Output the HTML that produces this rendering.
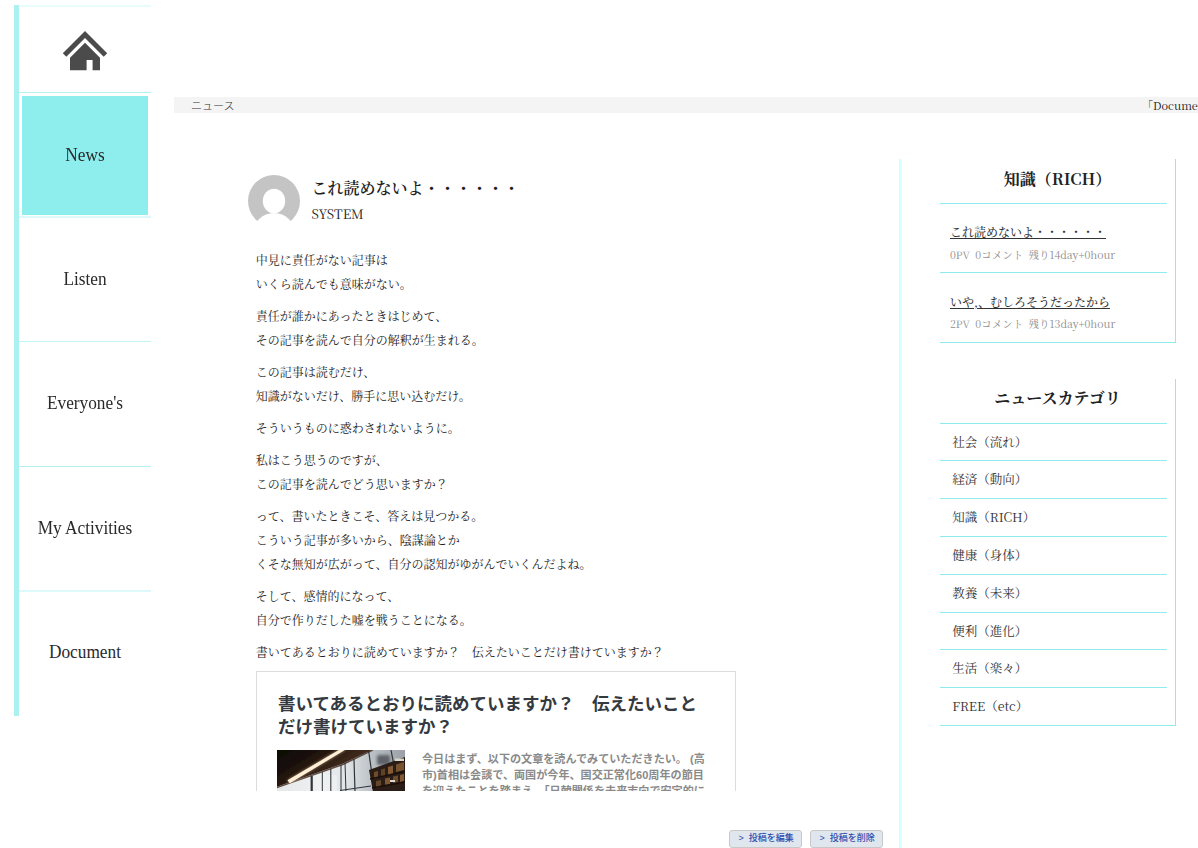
<!DOCTYPE html>
<html lang="ja">
<head>
<meta charset="utf-8">
<style>
html,body{margin:0;padding:0;background:#fff;}
body{width:1198px;height:848px;overflow:hidden;position:relative;font-family:"Liberation Serif","Noto Serif CJK JP",serif;color:#222;}
.abs{position:absolute;}
/* nav */
#bar{left:14px;top:5px;width:5px;height:711px;background:#adf0f0;}
#topline{left:19px;top:5px;width:132px;height:2px;background:#e9fcfc;}
.nl{position:absolute;left:19px;width:132px;height:1px;background:#b4f1f1;}
.nl2{position:absolute;left:19px;width:132px;height:2px;background:#dcfafa;}
.nav{position:absolute;left:19px;width:132px;display:flex;align-items:center;justify-content:center;font-family:"Liberation Serif",serif;font-size:17.3px;color:#2a2a2a;white-space:nowrap;}
#news{left:22px;top:96px;width:126px;height:119px;background:#8eeded;}
/* breadcrumb */
#crumb{left:174px;top:97px;width:1024px;height:16px;background:#f4f4f4;}
#crumb .t{position:absolute;left:17px;top:1px;font-family:"Liberation Sans","Noto Sans CJK JP",sans-serif;font-size:11px;line-height:17px;color:#333;font-weight:300;}
#crumb .r{position:absolute;left:968px;top:0px;font-family:"Noto Serif CJK JP","Liberation Serif",serif;font-size:11px;line-height:17px;color:#222;white-space:nowrap;}
/* main */
#vline{left:899px;top:159px;width:3px;height:689px;background:#d8fefe;}
.body p{margin:0;font-size:12px;line-height:24px;}

#avatar{left:248px;top:175px;}
#ttl{left:311.5px;top:176px;font-family:"Noto Serif CJK JP",serif;font-size:16px;font-weight:600;line-height:24px;color:#222;white-space:nowrap;}
#sys{left:311.5px;top:204px;font-family:"Noto Serif CJK JP",serif;font-size:13px;line-height:20px;color:#222;}
#body{left:255.7px;top:248px;width:640px;font-family:"Noto Serif CJK JP",serif;color:#222;}
#body p{margin:0 0 8px 0;font-size:12px;line-height:24px;white-space:nowrap;}
#card{left:256px;top:671px;width:478px;height:119px;overflow:hidden;border:1px solid #dcdcdc;border-bottom:none;font-family:"Liberation Sans","Noto Sans CJK JP",sans-serif;}
#card .ct{position:absolute;left:21px;top:21px;width:440px;font-size:17.5px;line-height:22.8px;font-weight:bold;color:#343a40;}
#card .img{position:absolute;left:20px;top:78px;width:128px;height:90px;overflow:hidden;background:#3a3a3a;}
#card .desc{position:absolute;left:165px;top:79px;white-space:nowrap;font-size:11.1px;line-height:16px;color:#8a8a8a;font-weight:bold;}
.btn{position:absolute;top:830px;width:70.5px;height:16px;border:1px solid #c8c8c8;border-radius:3px;background:#dfe6ee;font-family:"Liberation Sans","Noto Sans CJK JP",sans-serif;font-size:9px;line-height:15.5px;text-align:center;color:#2f4fb0;font-weight:500;white-space:pre;text-indent:2px;}

.side{position:absolute;left:940px;width:235px;border-right:1px solid #8eecec;border-bottom:1px solid #8eecec;font-family:"Noto Serif CJK JP",serif;color:#222;}
.side .st{position:absolute;left:0;width:235px;text-align:center;font-size:16px;font-weight:bold;line-height:24px;}
.side .ln{position:absolute;left:0;width:227px;height:1px;background:#8eecec;}
.side .it{position:absolute;left:10px;font-size:12px;line-height:18px;font-weight:500;text-decoration:underline;text-underline-offset:1px;color:#333;white-space:nowrap;}
.side .mt{position:absolute;left:10px;font-size:10.5px;line-height:16px;color:#8e8e8e;white-space:pre;}
.side .cat{position:absolute;left:12.2px;font-size:12.5px;line-height:20px;color:#333;white-space:nowrap;}
.nt{display:inline-block;transform:scaleY(1.09);}
</style>
</head>
<body>
<!-- left nav -->
<div class="abs" id="bar"></div>
<div class="abs" id="topline"></div>
<div class="nav" style="top:7px;height:85px;">
<svg width="46" height="40" viewBox="0 0 46 40" style="margin-top:2px"><path fill="#4b4b4b" d="M23 0 L45.2 22.2 L41.7 25.7 L23 7 L4.3 25.7 L0.8 22.2 Z"/><path fill="#4b4b4b" d="M23 11.8 L38 26.8 L38 39.3 L30.6 39.3 L30.6 29 L24.6 29 L24.6 39.3 L8 39.3 L8 26.8 Z"/></svg>
</div>
<div class="nl" style="top:92px"></div>
<div class="abs" id="news"></div>
<div class="nav" style="top:96px;height:119px;"><span class="nt">News</span></div>
<div class="nl2" style="top:216px"></div>
<div class="nav" style="top:218px;height:123px;"><span class="nt">Listen</span></div>
<div class="nl" style="top:341px;background:#c2f5f5"></div>
<div class="nav" style="top:342px;height:124px;"><span class="nt">Everyone's</span></div>
<div class="nl" style="top:466px"></div>
<div class="nav" style="top:467px;height:123px;"><span class="nt">My Activities</span></div>
<div class="nl2" style="top:590px"></div>
<div class="nav" style="top:592px;height:124px;"><span class="nt" style="transform:translateY(-1.5px) scaleY(1.09)">Document</span></div>

<!-- breadcrumb -->
<div class="abs" id="crumb"><span class="t">ニュース</span><span class="r">「Document」</span></div>


<!-- article -->
<svg class="abs" id="avatar" width="52" height="60" viewBox="0 0 52 60"><circle cx="26" cy="26" r="26" fill="#c4c4c4"/><ellipse cx="26" cy="26" rx="11.2" ry="12.3" fill="#fff"/><circle cx="26" cy="59.3" r="21.3" fill="#fff"/></svg>
<div class="abs" id="ttl">これ読めないよ・・・・・・</div>
<div class="abs" id="sys">SYSTEM</div>
<div class="abs" id="body">
<p>中見に責任がない記事は<br>いくら読んでも意味がない。</p>
<p>責任が誰かにあったときはじめて、<br>その記事を読んで自分の解釈が生まれる。</p>
<p>この記事は読むだけ、<br>知識がないだけ、勝手に思い込むだけ。</p>
<p>そういうものに惑わされないように。</p>
<p>私はこう思うのですが、<br>この記事を読んでどう思いますか？</p>
<p>って、書いたときこそ、答えは見つかる。<br>こういう記事が多いから、陰謀論とか<br>くそな無知が広がって、自分の認知がゆがんでいくんだよね。</p>
<p>そして、感情的になって、<br>自分で作りだした嘘を戦うことになる。</p>
<p>書いてあるとおりに読めていますか？　伝えたいことだけ書けていますか？</p>
</div>
<div class="abs" id="card">
<div class="ct">書いてあるとおりに読めていますか？　伝えたいこと<br>だけ書けていますか？</div>
<div class="img"><svg width="128" height="90" viewBox="0 0 128 90" style="display:block"><defs>
<linearGradient id="ceil" x1="0" y1="0" x2="0.9" y2="0.55"><stop offset="0" stop-color="#0a0604"/><stop offset="0.35" stop-color="#1c110b"/><stop offset="0.7" stop-color="#3a261a"/><stop offset="1" stop-color="#50362a"/></linearGradient>
<linearGradient id="win" x1="0" y1="0" x2="1" y2="0"><stop offset="0" stop-color="#cfd4d6"/><stop offset="0.35" stop-color="#eef0f0"/><stop offset="0.55" stop-color="#dfe3e5"/><stop offset="0.75" stop-color="#b9bfc4"/><stop offset="1" stop-color="#9aa0a5"/></linearGradient>
<filter id="bl" x="-20%" y="-20%" width="140%" height="140%"><feGaussianBlur stdDeviation="0.6"/></filter>
<filter id="bl2" x="-50%" y="-50%" width="200%" height="200%"><feGaussianBlur stdDeviation="1.6"/></filter>
</defs>
<rect width="128" height="90" fill="url(#win)"/><rect x="0" y="25" width="60" height="20" fill="#f2f4f4" opacity="0.6"/>
<g filter="url(#bl)">
<rect x="100" y="5" width="13" height="10" rx="2" fill="#5e6469" filter="url(#bl2)"/>
<g stroke="#2f3438" fill="none"><path d="M34.7 26 V42" stroke-width="2.2"/><path d="M45.3 22 V42" stroke-width="1"/><path d="M53.8 19 V42" stroke-width="1.1"/><path d="M64 15 V42" stroke-width="1"/><path d="M68 13 L69 42" stroke-width="1"/><path d="M77 9 L78 42" stroke-width="1.2"/><path d="M91.5 0 L94.5 21" stroke-width="1.2"/><path d="M114 0 L116.5 13" stroke-width="1.2"/><path d="M63 40.5 L94 36" stroke-width="1"/></g>
<path d="M0 0 H95 L65 14 L0 36.8 Z" fill="url(#ceil)"/>
<path d="M95 0 L65 14 L0 36.8 L0 38.2 L66 15.2 L96.5 0.6 Z" fill="#3b2418" opacity="0.8"/>
<path d="M10.5 30.3 L63.5 -1 L69.5 -1 L12.8 33.3 Z" fill="#fffaf0"/>
<path d="M92 20 L128 7 V42 H96 Z" fill="#2c1d12"/>
<g fill="#8c6238"><path d="M97 22 L101 21 V28 L97 29 Z" opacity="0.7"/><path d="M104 19.5 L108 18.3 V26 L104 27 Z" opacity="0.55"/><path d="M111 17 L116 15.5 V24 L111 25 Z" opacity="0.9"/><path d="M119 14.5 L127 12 V20 L119 22 Z" opacity="0.8"/><path d="M99 31 L104 30 V37 L99 38 Z" opacity="0.6"/><path d="M108 28.5 L113 27.5 V34 L108 35 Z" opacity="0.85"/><path d="M116 26.5 L121 25.5 V32 L116 33 Z" opacity="0.7"/><path d="M123 25 L127 24 V31 L123 32 Z" opacity="0.9"/></g>
<g stroke="#1a110a" stroke-width="1.3"><path d="M93 29 L128 21.5"/><path d="M95 38 L128 32"/></g>
<rect x="118" y="8.5" width="9" height="2.5" fill="#d8d6cc"/>
<rect x="113" y="30" width="5" height="2" fill="#dcd8cc"/>
</g>
<path d="M10.5 30.3 L63.5 -1 L69.5 -1 L12.8 33.3 Z" fill="#ffe2b0" opacity="0.6" filter="url(#bl2)"/>
</svg></div>
<div class="desc">今日はまず、以下の文章を読んでみていただきたい。 (高<br>市)首相は会談で、両国が今年、国交正常化60周年の節目<br>を迎えたことを踏まえ、「日韓関係を未来志向で安定的に</div>
</div>
<div class="btn" style="left:729px">&gt;  投稿を編集</div>
<div class="btn" style="left:810px">&gt;  投稿を削除</div>
<div class="abs" id="vline"></div>
<!-- sidebar -->
<div class="side" style="top:159px;height:183px;">
<div class="st" style="top:8px">知識（RICH）</div>
<div class="ln" style="top:44px"></div>
<div class="it" style="top:64px">これ読めないよ・・・・・・</div>
<div class="mt" style="top:88px">0PV  0コメント  残り14day+0hour</div>
<div class="ln" style="top:113px"></div>
<div class="it" style="top:134px">いや,、むしろそうだったから</div>
<div class="mt" style="top:157px">2PV  0コメント  残り13day+0hour</div>
</div>
<div class="side" style="top:379px;height:346px;">
<div class="st" style="top:7px">ニュースカテゴリ</div>
<div class="ln" style="top:44px"></div>
<div class="cat" style="top:53px">社会（流れ）</div>
<div class="ln" style="top:81px"></div>
<div class="cat" style="top:90px">経済（動向）</div>
<div class="ln" style="top:119px"></div>
<div class="cat" style="top:128px">知識（RICH）</div>
<div class="ln" style="top:157px"></div>
<div class="cat" style="top:166px">健康（身体）</div>
<div class="ln" style="top:195px"></div>
<div class="cat" style="top:204px">教養（未来）</div>
<div class="ln" style="top:233px"></div>
<div class="cat" style="top:242px">便利（進化）</div>
<div class="ln" style="top:270px"></div>
<div class="cat" style="top:279px">生活（楽々）</div>
<div class="ln" style="top:308px"></div>
<div class="cat" style="top:317px">FREE（etc）</div>
</div>

</body>
</html>
